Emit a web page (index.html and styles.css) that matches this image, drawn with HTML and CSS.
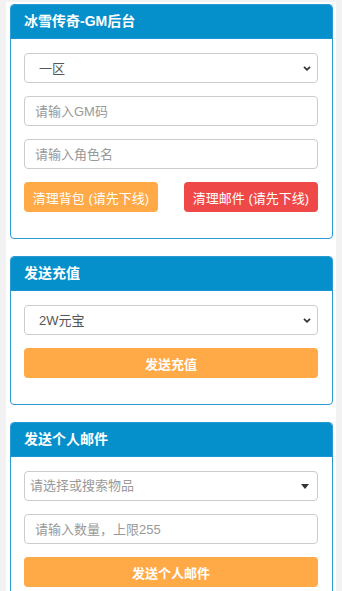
FILE: index.html
```html
<!DOCTYPE html>
<html lang="zh-CN">
<head>
<meta charset="utf-8">
<title>冰雪传奇-GM后台</title>
<link rel="stylesheet" href="styles.css">
</head>
<body>
<div class="page">
  <section class="card">
    <div class="card-head">冰雪传奇-GM后台</div>
    <div class="card-body">
      <div class="field select-wrap">
        <select class="control select"><option>一区</option></select>
        <svg class="chev" width="10" height="7" viewBox="0 0 10 7"><path d="M2 1.8 L5 4.8 L8 1.8" fill="none" stroke="#333" stroke-width="1.8"/></svg>
      </div>
      <input class="field control" placeholder="请输入GM码">
      <input class="field control" placeholder="请输入角色名">
      <div class="field btn-row">
        <button class="btn btn-orange half">清理背包 (请先下线)</button>
        <button class="btn btn-red half">清理邮件 (请先下线)</button>
      </div>
    </div>
  </section>

  <section class="card">
    <div class="card-head">发送充值</div>
    <div class="card-body">
      <div class="field select-wrap">
        <select class="control select"><option>2W元宝</option></select>
        <svg class="chev" width="10" height="7" viewBox="0 0 10 7"><path d="M2 1.8 L5 4.8 L8 1.8" fill="none" stroke="#333" stroke-width="1.8"/></svg>
      </div>
      <button class="field btn btn-orange full">发送充值</button>
    </div>
  </section>

  <section class="card">
    <div class="card-head">发送个人邮件</div>
    <div class="card-body">
      <div class="field select-wrap">
        <div class="control search-select">请选择或搜索物品</div>
        <svg class="caret" width="8" height="5" viewBox="0 0 8 5"><path d="M0 0 H8 L4 5 Z" fill="#333"/></svg>
      </div>
      <input class="field control" placeholder="请输入数量，上限255">
      <button class="field btn btn-orange full">发送个人邮件</button>
    </div>
  </section>
</div>
</body>
</html>
```

FILE: styles.css
```css
* { box-sizing: border-box; }
html, body { margin: 0; padding: 0; }
body {
  background: #f2f2f2;
  font-family: "Liberation Sans", "Noto Sans CJK SC", sans-serif;
  font-size: 13px;
  color: #555;
}
.page {
  margin: 2px 6px 0 6px;
  background: #fff;
  padding: 2px 3px 10px 4px;
  min-height: 600px;
}
.card {
  border: 1px solid #2b9bd6;
  border-radius: 4px;
  margin-bottom: 17px;
  overflow: hidden;
}
.card-head {
  background: #058fcb;
  color: #fff;
  font-size: 14px;
  font-weight: bold;
  height: 34px;
  line-height: 32px;
  padding-left: 13px;
  border-bottom: 1px solid #1a96d2;
}
.card-body {
  padding: 14px 14px 13px 13px;
}
.field {
  display: block;
  margin-bottom: 13px;
}
.control {
  display: block;
  width: 100%;
  height: 30px;
  border: 1px solid #ccc;
  border-radius: 4px;
  background: #fff;
  font-family: inherit;
  font-size: 13px;
  color: #555;
  padding: 0 10px;
  outline: none;
}
.control::placeholder { color: #999; }
.select-wrap { position: relative; }
.select {
  -webkit-appearance: none;
  appearance: none;
  padding-left: 14px;
}
.chev {
  position: absolute;
  right: 6px;
  top: 12px;
}
.search-select {
  line-height: 28px;
  color: #999;
  padding-left: 5px;
  height: 30px;
}
.caret {
  position: absolute;
  right: 9px;
  top: 13px;
}
.btn-row {
  display: flex;
  justify-content: space-between;
}
.btn {
  height: 30px;
  border: none;
  border-radius: 4px;
  color: #fff;
  font-family: inherit;
  font-size: 13px;
  padding: 0;
  cursor: pointer;
}
.half { width: calc(50% - 13px); }
.full { width: 100%; font-weight: bold; }
.btn-orange { background: #ffa947; }
.btn-red { background: #ef4848; }
```
